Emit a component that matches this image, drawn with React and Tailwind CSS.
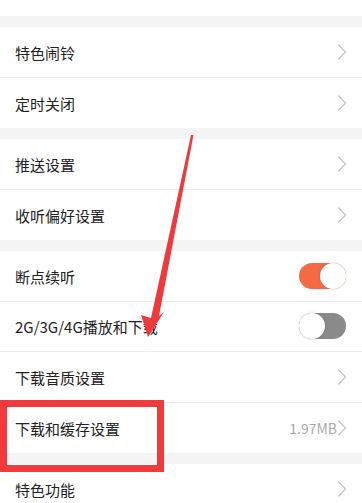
import { ChevronRight } from "lucide-react";

const groups = [
  [
    { label: "特色闹铃", kind: "link" },
    { label: "定时关闭", kind: "link" },
  ],
  [
    { label: "推送设置", kind: "link" },
    { label: "收听偏好设置", kind: "link" },
  ],
  [
    { label: "断点续听", kind: "toggle", on: true },
    { label: "2G/3G/4G播放和下载", kind: "toggle", on: false },
    { label: "下载音质设置", kind: "link" },
    { label: "下载和缓存设置", kind: "link", value: "1.97MB" },
  ],
  [{ label: "特色功能", kind: "link" }],
];

function Toggle({ on }) {
  return (
    <div
      className={`w-[47px] h-[26px] rounded-full flex items-center ${
        on ? "bg-[#f36a45] justify-end" : "bg-[#8a8a8a] justify-start"
      }`}
    >
      <div className="w-[26px] h-[26px] rounded-full bg-white shadow-[0_0_3px_rgba(0,0,0,0.18)]" />
    </div>
  );
}

function Row({ item, last }) {
  return (
    <div className={`h-[50.5px] flex items-center pl-[15px] pr-[16px] bg-white ${last ? "" : "border-b border-[#ececec]"}`}>
      <span className="flex-1 text-[15px] text-[#222] pt-[2px]">{item.label}</span>
      {item.kind === "toggle" ? (
        <Toggle on={item.on} />
      ) : (
        <div className="flex items-center -mr-[10px]">
          {item.value ? <span className="text-[14px] text-[#aaa] -mr-[9px] pt-[2px]">{item.value}</span> : null}
          <ChevronRight size={28} strokeWidth={1} className="text-[#c4c4c4]" />
        </div>
      )}
    </div>
  );
}

export default function App() {
  return (
    <div
      className="relative w-[362px] h-[503px] overflow-hidden bg-[#f4f4f4]"
      style={{ fontFamily: '"Noto Sans CJK SC", "Noto Sans", sans-serif' }}
    >
      <div className="h-[16px] bg-white" />
      <div className="flex flex-col gap-[11px] pt-[11px]">
        {groups.map((g, gi) => (
          <div key={gi} className="flex flex-col">
            {g.map((item, i) => (
              <Row key={i} item={item} last={i === g.length - 1} />
            ))}
          </div>
        ))}
      </div>

      {/* red highlight box */}
      <div className="absolute left-0 top-[400px] w-[164px] h-[72px] border-[7px] border-[#f03a3c]" />

      {/* red arrow */}
      <svg className="absolute left-0 top-0" width="362" height="503" viewBox="0 0 362 503">
        <polygon
          points="191,135 193.5,135 159,316 164,312 148,337 141,315 151,318"
          fill="#ee3a3c"
        />
      </svg>
    </div>
  );
}
